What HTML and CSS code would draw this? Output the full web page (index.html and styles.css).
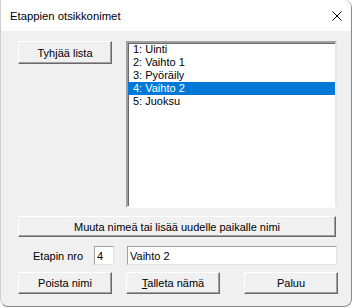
FILE: index.html
```html
<!DOCTYPE html>
<html lang="fi">
<head>
    <meta charset="UTF-8">
    <title>Etappien otsikkonimet</title>
    <link rel="stylesheet" href="styles.css">
</head>
<body>
    <div class="window">
        <div class="titlebar">
            <span class="title">Etappien otsikkonimet</span>
            <svg class="close" width="10" height="10" viewBox="0 0 10 10">
                <path d="M0.5 0.5 L9.5 9.5 M9.5 0.5 L0.5 9.5" stroke="#000" stroke-width="1" fill="none"/>
            </svg>
        </div>
        <div class="content">
            <div class="top-row">
                <button class="btn btn-clear">Tyhjää lista</button>
                <ul class="listbox">
                    <li>1: Uinti</li>
                    <li>2: Vaihto 1</li>
                    <li>3: Pyöräily</li>
                    <li class="selected">4: Vaihto 2</li>
                    <li>5: Juoksu</li>
                </ul>
            </div>
            <button class="btn btn-wide">Muuta nimeä tai lisää uudelle paikalle nimi</button>
            <div class="field-row">
                <label class="nro-label" for="nro">Etapin nro</label>
                <input class="field field-nro" id="nro" value="4">
                <input class="field field-name" value="Vaihto 2">
            </div>
            <div class="button-row">
                <button class="btn">Poista nimi</button>
                <button class="btn"><u>T</u>alleta nämä</button>
                <button class="btn btn-back">Paluu</button>
            </div>
        </div>
    </div>
</body>
</html>
```

FILE: styles.css
```css
body {
    margin: 0;
    padding: 0;
    background-color: #ffffff;
    font-family: "Liberation Sans", Arial, sans-serif;
    font-size: 11px;
    color: #000;
}
.window {
    width: 350px;
    height: 306px;
    background-color: #f0f0f0;
    border-right: 1px solid #8a8a8a;
    border-bottom: 1px solid #8a8a8a;
    border-left: 1px solid #d0d0d0;
    border-radius: 0 8px 8px 8px;
    overflow: hidden;
}
.titlebar {
    height: 31px;
    background-color: #ffffff;
    display: flex;
    align-items: center;
    justify-content: space-between;
    padding: 0 9px 0 9px;
    box-sizing: border-box;
}
.title {
    font-size: 11.3px;
    padding-top: 1px;
}
.close {
    display: block;
    margin-top: 0;
}
.content {
    padding: 10px 0 0 17px;
}
.top-row {
    display: flex;
    gap: 14px;
    align-items: flex-start;
}
.btn {
    font-family: inherit;
    font-size: 11px;
    color: #000;
    background-color: #f0f0f0;
    width: 94px;
    height: 22px;
    padding: 0;
    margin: 0;
    border: 1px solid;
    border-color: #ffffff #696969 #696969 #ffffff;
    box-shadow: inset -1px -1px 0 #a0a0a0;
    border-radius: 0;
}
.btn-clear {
    height: 23px;
}
.listbox {
    list-style: none;
    margin: 0;
    padding: 0;
    width: 207px;
    height: 163px;
    background-color: #fff;
    border: 2px solid;
    border-color: #a0a0a0 #e8e8e8 #ffffff #a0a0a0;
    box-shadow: inset 1px 1px 0 #696969;
}
.listbox li {
    height: 13px;
    line-height: 13px;
    padding-left: 5px;
}
.listbox li:first-child {
    margin-top: 0;
}
.listbox .selected {
    background-color: #0078d7;
    color: #fff;
}
.btn-wide {
    display: block;
    width: 318px;
    height: 21px;
    margin-top: 8px;
}
.field-row {
    display: flex;
    align-items: center;
    margin-top: 9px;
    height: 19px;
}
.nro-label {
    margin-left: 15px;
    width: 61px;
}
.field {
    font-family: inherit;
    font-size: 11px;
    height: 19px;
    box-sizing: border-box;
    margin: 0;
    padding: 0 0 0 2px;
    background-color: #fff;
    border: 1px solid;
    border-color: #a0a0a0 #e3e3e3 #e3e3e3 #a0a0a0;
    outline: none;
}
.field-nro {
    width: 20px;
}
.field-name {
    width: 210px;
    margin-left: 13px;
}
.button-row {
    display: flex;
    gap: 14px;
    margin-top: 7px;
}
.btn-back {
    margin-left: 10px;
}
```
